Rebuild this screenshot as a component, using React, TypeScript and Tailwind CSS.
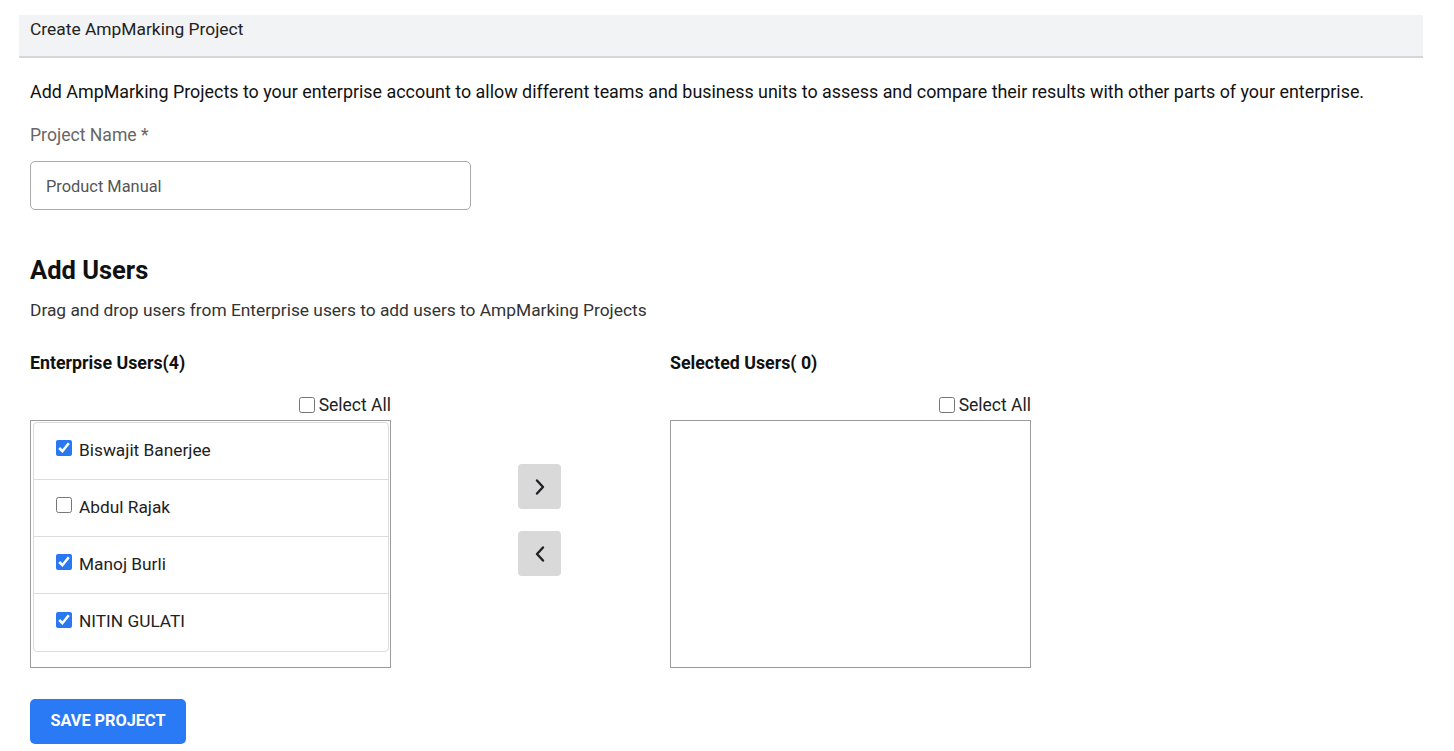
import React from "react";

const users = [
  { name: "Biswajit Banerjee", checked: true },
  { name: "Abdul Rajak", checked: false },
  { name: "Manoj Burli", checked: true },
  { name: "NITIN GULATI", checked: true },
];

function Chevron({ dir }: { dir: "left" | "right" }) {
  return (
    <svg width="16" height="18" viewBox="0 0 16 18" fill="none">
      {dir === "right" ? (
        <path d="M5 2.5 L11 9 L5 15.5" stroke="#1f2124" strokeWidth="2.4" strokeLinecap="round" strokeLinejoin="round" />
      ) : (
        <path d="M11 2.5 L5 9 L11 15.5" stroke="#1f2124" strokeWidth="2.4" strokeLinecap="round" strokeLinejoin="round" />
      )}
    </svg>
  );
}

export default function App() {
  return (
    <div className="bg-white w-[1454px] h-[751px] overflow-hidden" style={{ fontFamily: "Roboto, 'Liberation Sans', sans-serif" }}>
      <div className="pt-[15px] pl-[19px]">
        <div className="w-[1404px] h-[43px] bg-[#f2f3f5] border-b-2 border-[#d6d6d8] pl-[11px] pt-[2px] text-[17.4px] text-[#222] leading-[24px]">
          Create AmpMarking Project
        </div>
      </div>
      <div className="pl-[30px]">
        <p className="mt-[22px] text-[17.9px] leading-[24px] text-[#111]">
          Add AmpMarking Projects to your enterprise account to allow different teams and business units to assess and compare their results with other parts of your enterprise.
        </p>
        <div className="mt-[21px] text-[17.6px] leading-[20px] text-[#666]">Project Name *</div>
        <div className="mt-[16px] w-[441px] h-[49px] border border-[#a9a9a9] rounded-[5px] flex items-center pl-[15px] pt-[3px] text-[16.4px] text-[#555]">
          Product Manual
        </div>
        <h2 className="mt-[46px] text-[25.5px] font-bold leading-[28px] text-[#111]">Add Users</h2>
        <p className="mt-[16px] text-[17.35px] leading-[20px] text-[#333]">
          Drag and drop users from Enterprise users to add users to AmpMarking Projects
        </p>
        <div className="flex mt-[33px]">
          <div className="w-[361px]">
            <div className="text-[17.8px] font-bold leading-[20px] text-[#111]">Enterprise Users(4)</div>
            <div className="flex justify-end items-center mt-[21px] h-[22px]">
              <input type="checkbox" className="w-[16px] h-[16px] m-0 mr-[4px]" readOnly />
              <span className="text-[17.5px] text-[#222] leading-[22px]">Select All</span>
            </div>
            <div className="mt-[4px] h-[248px] border border-[#9b9b9b] pt-[1px] pl-[2px]">
              <div className="border border-[#dcdcdc] rounded-[4px] w-[356px]">
                {users.map((u, i) => (
                  <div
                    key={u.name}
                    className={`h-[57px] flex items-center pl-[22px] pb-[3px] ${i < users.length - 1 ? "border-b border-[#dcdcdc]" : ""}`}
                  >
                    <input
                      type="checkbox"
                      checked={u.checked}
                      readOnly
                      className="w-[16px] h-[16px] m-0 mr-[7px] mb-[3px] accent-[#2a78f0]"
                    />
                    <span className="text-[17.3px] text-[#222] leading-[22px]">{u.name}</span>
                  </div>
                ))}
              </div>
            </div>
          </div>
          <div className="w-[279px] pl-[127px] pt-[111px] flex flex-col gap-[22px]">
            <div className="w-[43px] h-[45px] bg-[#d9d9d9] rounded-[4px] flex items-center justify-center">
              <Chevron dir="right" />
            </div>
            <div className="w-[43px] h-[45px] bg-[#d9d9d9] rounded-[4px] flex items-center justify-center">
              <Chevron dir="left" />
            </div>
          </div>
          <div className="w-[361px]">
            <div className="text-[17.8px] font-bold leading-[20px] text-[#111]">Selected Users( 0)</div>
            <div className="flex justify-end items-center mt-[21px] h-[22px]">
              <input type="checkbox" className="w-[16px] h-[16px] m-0 mr-[4px]" readOnly />
              <span className="text-[17.5px] text-[#222] leading-[22px]">Select All</span>
            </div>
            <div className="mt-[4px] h-[248px] border border-[#9b9b9b]"></div>
          </div>
        </div>
        <button className="mt-[31px] w-[156px] h-[45px] bg-[#2a7af5] rounded-[5px] text-white font-bold text-[16.3px] uppercase">
          Save Project
        </button>
      </div>
    </div>
  );
}
